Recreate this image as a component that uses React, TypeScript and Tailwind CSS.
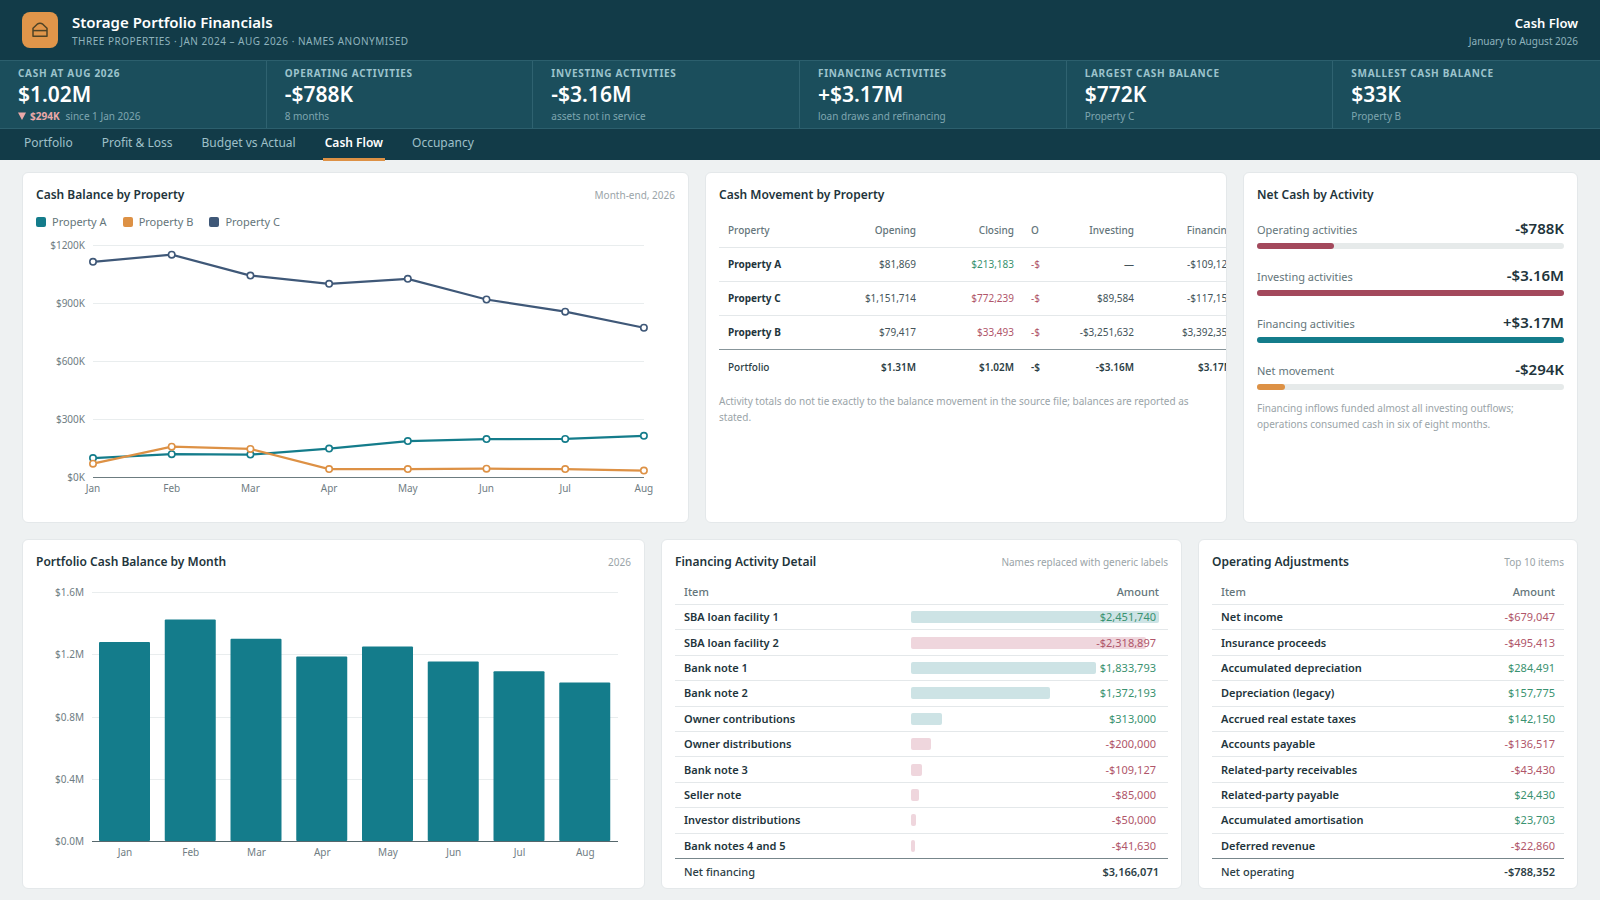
import type {ReactNode} from "react";

const MONTHS = ["Jan", "Feb", "Mar", "Apr", "May", "Jun", "Jul", "Aug"];

const TABS = ["Portfolio", "Profit & Loss", "Budget vs Actual", "Cash Flow", "Occupancy"];

const KPIS = [
  {label: "Cash at Aug 2026", value: "$1.02M", note: "since 1 Jan 2026", delta: "$294K"},
  {label: "Operating activities", value: "-$788K", note: "8 months"},
  {label: "Investing activities", value: "-$3.16M", note: "assets not in service"},
  {label: "Financing activities", value: "+$3.17M", note: "loan draws and refinancing"},
  {label: "Largest cash balance", value: "$772K", note: "Property C"},
  {label: "Smallest cash balance", value: "$33K", note: "Property B"},
];

// Month-end balances, in thousands
const SERIES = [
  {name: "Property C", color: "#3f5878", values: [1113, 1150, 1042, 999, 1025, 918, 855, 772]},
  {name: "Property A", color: "#147c8b", values: [98, 118, 116, 147, 186, 196, 197, 213]},
  {name: "Property B", color: "#dd9145", values: [69, 157, 145, 41, 41, 43, 41, 33]},
];

const LEGEND = [
  {name: "Property A", swatch: "bg-[#147c8b]"},
  {name: "Property B", swatch: "bg-[#dd9145]"},
  {name: "Property C", swatch: "bg-[#3f5878]"},
];

// Portfolio balance, in millions
const BALANCES = [1.278, 1.424, 1.3, 1.185, 1.25, 1.154, 1.09, 1.018];

const MOVEMENT = [
  {name: "Property A", opening: "$81,869", closing: "$213,183", up: true, investing: "—", financing: "-$109,127"},
  {name: "Property C", opening: "$1,151,714", closing: "$772,239", up: false, investing: "$89,584", financing: "-$117,157"},
  {name: "Property B", opening: "$79,417", closing: "$33,493", up: false, investing: "-$3,251,632", financing: "$3,392,355"},
];

const ACTIVITIES = [
  {name: "Operating activities", value: "-$788K", percent: 25, color: "bg-[#a3495c]"},
  {name: "Investing activities", value: "-$3.16M", percent: 100, color: "bg-[#a3495c]"},
  {name: "Financing activities", value: "+$3.17M", percent: 100, color: "bg-[#147c8b]"},
  {name: "Net movement", value: "-$294K", percent: 9, color: "bg-[#dd9145]"},
];

const FINANCING = [
  {name: "SBA loan facility 1", amount: 2451740},
  {name: "SBA loan facility 2", amount: -2318897},
  {name: "Bank note 1", amount: 1833793},
  {name: "Bank note 2", amount: 1372193},
  {name: "Owner contributions", amount: 313000},
  {name: "Owner distributions", amount: -200000},
  {name: "Bank note 3", amount: -109127},
  {name: "Seller note", amount: -85000},
  {name: "Investor distributions", amount: -50000},
  {name: "Bank notes 4 and 5", amount: -41630},
];

const ADJUSTMENTS = [
  {name: "Net income", amount: -679047},
  {name: "Insurance proceeds", amount: -495413},
  {name: "Accumulated depreciation", amount: 284491},
  {name: "Depreciation (legacy)", amount: 157775},
  {name: "Accrued real estate taxes", amount: 142150},
  {name: "Accounts payable", amount: -136517},
  {name: "Related-party receivables", amount: -43430},
  {name: "Related-party payable", amount: 24430},
  {name: "Accumulated amortisation", amount: 23703},
  {name: "Deferred revenue", amount: -22860},
];

const money = (amount: number) =>
  `${amount < 0 ? "-" : ""}$${Math.abs(amount).toLocaleString("en-US")}`;

const amountColor = (amount: number) => (amount < 0 ? "text-[#b0566a]" : "text-[#3a9270]");

const Card = ({title, note, children}: {title: string; note?: string; children: ReactNode}) => (
  <section className="flex min-w-0 flex-col overflow-hidden rounded-md border border-[#e4e8ea] bg-white px-[13px] pt-3">
    <div className="flex items-center justify-between">
      <h2 className="text-xs leading-5 font-semibold">{title}</h2>
      {note && <span className="text-[10px] leading-5 text-[#9aa4a8]">{note}</span>}
    </div>
    {children}
  </section>
);

const LineChart = () => {
  const x = (i: number) => 57 + i * 78.7;
  const y = (value: number) => 245 - (value / 1200) * 232;

  return (
    <svg
      aria-label="Cash balance by property"
      className="w-full text-[10px]"
      role="img"
      viewBox="0 0 639 270"
    >
      {[1200, 900, 600, 300, 0].map((tick) => (
        <g key={tick}>
          <line stroke={tick ? "#e9edee" : "#6c7c80"} x1="57" x2="608" y1={y(tick) + 0.5} y2={y(tick) + 0.5} />
          <text fill="#6f7d83" textAnchor="end" x="49" y={y(tick) + 4}>
            {`$${tick}K`}
          </text>
        </g>
      ))}
      {MONTHS.map((month, i) => (
        <text key={month} fill="#6f7d83" textAnchor="middle" x={x(i)} y="260">
          {month}
        </text>
      ))}
      {SERIES.map(({name, color, values}) => (
        <g key={name} fill="white" stroke={color}>
          <polyline
            fill="none"
            points={values.map((value, i) => `${x(i)},${y(value)}`).join(" ")}
            strokeWidth="2.2"
          />
          {values.map((value, i) => (
            <circle key={i} cx={x(i)} cy={y(value)} r="3.2" strokeWidth="1.6" />
          ))}
        </g>
      ))}
    </svg>
  );
};

const BarChart = () => {
  const y = (value: number) => 262 - (value / 1.6) * 249;

  return (
    <svg
      aria-label="Portfolio cash balance by month"
      className="w-full text-[10px]"
      role="img"
      viewBox="0 0 595 290"
    >
      {[1.6, 1.2, 0.8, 0.4, 0].map((tick) => (
        <g key={tick}>
          <line stroke="#e9edee" x1="56" x2="582" y1={Math.round(y(tick)) + 0.5} y2={Math.round(y(tick)) + 0.5} />
          <text fill="#6f7d83" textAnchor="end" x="48" y={Math.round(y(tick)) + 4}>
            {`$${tick.toFixed(1)}M`}
          </text>
        </g>
      ))}
      {BALANCES.map((value, i) => (
        <g key={i}>
          <rect fill="#147c8b" height={262 - y(value)} rx="1" width="51" x={63 + i * 65.75} y={y(value)} />
          <text fill="#6f7d83" textAnchor="middle" x={89 + i * 65.75} y="277">
            {MONTHS[i]}
          </text>
        </g>
      ))}
      <line stroke="#56676c" x1="56" x2="582" y1="262.5" y2="262.5" />
    </svg>
  );
};

const MovementTable = () => (
  <table className="mt-2.5 w-[523px] table-fixed text-[10px]">
    <colgroup>
      <col className="w-[108px]" />
      <col className="w-[98px]" />
      <col className="w-[98px]" />
      <col className="w-[28px]" />
      <col className="w-[92px]" />
      <col className="w-[99px]" />
    </colgroup>
    <thead className="text-[#64757a]">
      <tr className="h-[32px] border-b border-[#e4e8ea] text-right">
        <th className="px-[9px] text-left font-medium">Property</th>
        <th className="px-[9px] font-medium">Opening</th>
        <th className="px-[9px] font-medium">Closing</th>
        <th className="pl-2 text-left font-medium">O</th>
        <th className="px-[9px] font-medium">Investing</th>
        <th className="px-[9px] font-medium">Financing</th>
      </tr>
    </thead>
    <tbody className="text-[#44545a]">
      {MOVEMENT.map((row) => (
        <tr key={row.name} className="h-[34px] border-b border-[#e4e8ea] text-right last:border-[#87959a]">
          <th className="px-[9px] text-left font-bold text-[#22343b]">{row.name}</th>
          <td className="px-[9px]">{row.opening}</td>
          <td className={row.up ? "px-[9px] text-[#3a9270]" : "px-[9px] text-[#b0566a]"}>{row.closing}</td>
          <td className="pl-2 text-left text-[#b0566a]">-$</td>
          <td className="px-[9px]">{row.investing}</td>
          <td className="px-[9px]">{row.financing}</td>
        </tr>
      ))}
    </tbody>
    <tfoot>
      <tr className="h-[36px] text-right font-semibold text-[#2c3e45]">
        <th className="px-[9px] text-left font-medium">Portfolio</th>
        <td className="px-[9px]">$1.31M</td>
        <td className="px-[9px]">$1.02M</td>
        <td className="pl-2 text-left">-$</td>
        <td className="px-[9px]">-$3.16M</td>
        <td className="px-[9px]">$3.17M</td>
      </tr>
    </tfoot>
  </table>
);

type ItemTableProps = {
  rows: {name: string; amount: number}[];
  totalLabel: string;
  total: string;
  bars?: boolean;
};

const ItemTable = ({rows, totalLabel, total, bars = false}: ItemTableProps) => {
  const max = Math.max(...rows.map((row) => Math.abs(row.amount)));

  return (
    <table className="mt-2 h-[305px] w-full table-fixed text-[11px] leading-4">
      <thead className="text-[#64757a]">
        <tr className="h-[25px] border-b border-[#e4e8ea]">
          <th className="px-[9px] text-left font-medium">Item</th>
          <th className={bars ? "w-[54%] px-[9px] text-right font-medium" : "w-[32%] px-[9px] text-right font-medium"}>
            Amount
          </th>
        </tr>
      </thead>
      <tbody>
        {rows.map(({name, amount}) => (
          <tr key={name} className="h-[25px] border-b border-[#e4e8ea] last:border-[#77868b]">
            <th className="px-[9px] text-left font-semibold whitespace-nowrap text-[#22343b]">{name}</th>
            <td className={`px-[9px] text-right ${amountColor(amount)}`}>
              {bars ? (
                <div className="relative pr-[3px]">
                  <div
                    className={
                      amount < 0
                        ? "absolute top-0.5 left-0 h-3 rounded-xs bg-[#efd6dd]"
                        : "absolute top-0.5 left-0 h-3 rounded-xs bg-[#cde3e5]"
                    }
                    style={{width: `${(Math.abs(amount) / max) * 100}%`}}
                  />
                  <span className="relative">{money(amount)}</span>
                </div>
              ) : (
                money(amount)
              )}
            </td>
          </tr>
        ))}
      </tbody>
      <tfoot className="text-[#2c3e45]">
        <tr className="h-[26px]">
          <th className="px-[9px] text-left font-medium">{totalLabel}</th>
          <td className="px-[9px] text-right font-semibold">{total}</td>
        </tr>
      </tfoot>
    </table>
  );
};

const App = () => {
  return (
    <div className="flex min-h-screen flex-col bg-[#eef1f2] font-['Noto_Sans','Open_Sans',sans-serif] text-[#22343b]">
      <header className="flex h-[60px] items-center justify-between bg-[#123b48] px-[22px]">
        <div className="flex items-center gap-3.5">
          <div className="flex size-9 items-center justify-center rounded-lg bg-[#e0954a]">
            <svg fill="none" height="16" stroke="#4f4326" strokeLinejoin="round" strokeWidth="1.5" viewBox="0 0 16 16" width="16">
              <path d="M1 14.2V6.2L5.2 2.2Q8 .2 10.8 2.2L15 6.2v8z" />
              <path d="M1 8.6h14" />
            </svg>
          </div>
          <div className="pt-0.5">
            <h1 className="text-[15px] leading-5 font-semibold text-white">Storage Portfolio Financials</h1>
            <p className="text-[10px] leading-[18px] tracking-wider text-[#8fb3bd] uppercase">
              Three properties · Jan 2024 – Aug 2026 · Names anonymised
            </p>
          </div>
        </div>
        <div className="pt-0.5 text-right">
          <p className="text-[13px] leading-5 font-semibold text-white">Cash Flow</p>
          <p className="text-[10px] leading-4 text-[#8fb3bd]">January to August 2026</p>
        </div>
      </header>

      <section className="grid grid-cols-6 border-y border-[#2c5f6d] bg-[#1b4e5c]">
        {KPIS.map(({label, value, note, delta}) => (
          <div key={label} className="border-r border-[#2f6270] px-[18px] py-1 last:border-r-0">
            <p className="text-[10px] leading-4 font-bold tracking-[0.07em] text-[#9cc3cc] uppercase">{label}</p>
            <p className="text-[21px] leading-[27px] font-semibold text-white">{value}</p>
            <p className="flex items-center gap-1.5 text-[10px] leading-4 text-[#7fa6b0]">
              {delta && (
                <span className="flex items-center gap-1 font-bold text-[#eba9a9]">
                  <svg fill="currentColor" height="8" viewBox="0 0 8 8" width="8">
                    <path d="M0 .5h8L4 8z" />
                  </svg>
                  {delta}
                </span>
              )}
              {note}
            </p>
          </div>
        ))}
      </section>

      <nav className="flex h-[31px] gap-[25px] bg-[#123b48] px-[22px]">
        {TABS.map((tab) => (
          <button
            key={tab}
            className={
              tab === "Cash Flow"
                ? "-mb-px border-b-[3px] border-[#dd9145] px-0.5 pb-0.5 text-xs font-semibold text-white"
                : "-mb-px border-b-[3px] border-transparent px-0.5 pb-0.5 text-xs text-[#9fc0c8]"
            }
            type="button"
          >
            {tab}
          </button>
        ))}
      </nav>

      <main className="grid flex-1 grid-rows-2 gap-4 px-[22px] pt-3 pb-[11px]">
        <div className="grid grid-cols-[667fr_522fr_335fr] gap-4">
          <Card note="Month-end, 2026" title="Cash Balance by Property">
            <ul className="mt-[7px] flex gap-4 text-[11px] leading-5 text-[#64757a]">
              {LEGEND.map(({name, swatch}) => (
                <li key={name} className="flex items-center gap-1.5">
                  <span className={`size-2.5 rounded-xs ${swatch}`} />
                  {name}
                </li>
              ))}
            </ul>
            <LineChart />
          </Card>
          <Card title="Cash Movement by Property">
            <MovementTable />
            <p className="mt-2 text-[10px] leading-4 text-[#9aa4a8]">
              Activity totals do not tie exactly to the balance movement in the source file; balances are reported as
              stated.
            </p>
          </Card>
          <Card title="Net Cash by Activity">
            <ul className="mt-[11px] flex flex-col gap-3.5">
              {ACTIVITIES.map(({name, value, percent, color}) => (
                <li key={name}>
                  <div className="flex h-6 items-baseline justify-between leading-6">
                    <span className="text-[11px] text-[#64757a]">{name}</span>
                    <span className="text-[15px] font-semibold">{value}</span>
                  </div>
                  <div className="mt-[3px] h-1.5 rounded-full bg-[#e6eaea]">
                    <div className={`h-full rounded-full ${color}`} style={{width: `${percent}%`}} />
                  </div>
                </li>
              ))}
            </ul>
            <p className="mt-2.5 text-[10px] leading-4 text-[#9aa4a8]">
              Financing inflows funded almost all investing outflows; operations consumed cash in six of eight months.
            </p>
          </Card>
        </div>

        <div className="grid grid-cols-[623fr_521fr_380fr] gap-4">
          <Card note="2026" title="Portfolio Cash Balance by Month">
            <div className="mt-[7px]">
              <BarChart />
            </div>
          </Card>
          <Card note="Names replaced with generic labels" title="Financing Activity Detail">
            <ItemTable bars rows={FINANCING} total="$3,166,071" totalLabel="Net financing" />
          </Card>
          <Card note="Top 10 items" title="Operating Adjustments">
            <ItemTable rows={ADJUSTMENTS} total="-$788,352" totalLabel="Net operating" />
          </Card>
        </div>
      </main>
    </div>
  );
};

export default App;
